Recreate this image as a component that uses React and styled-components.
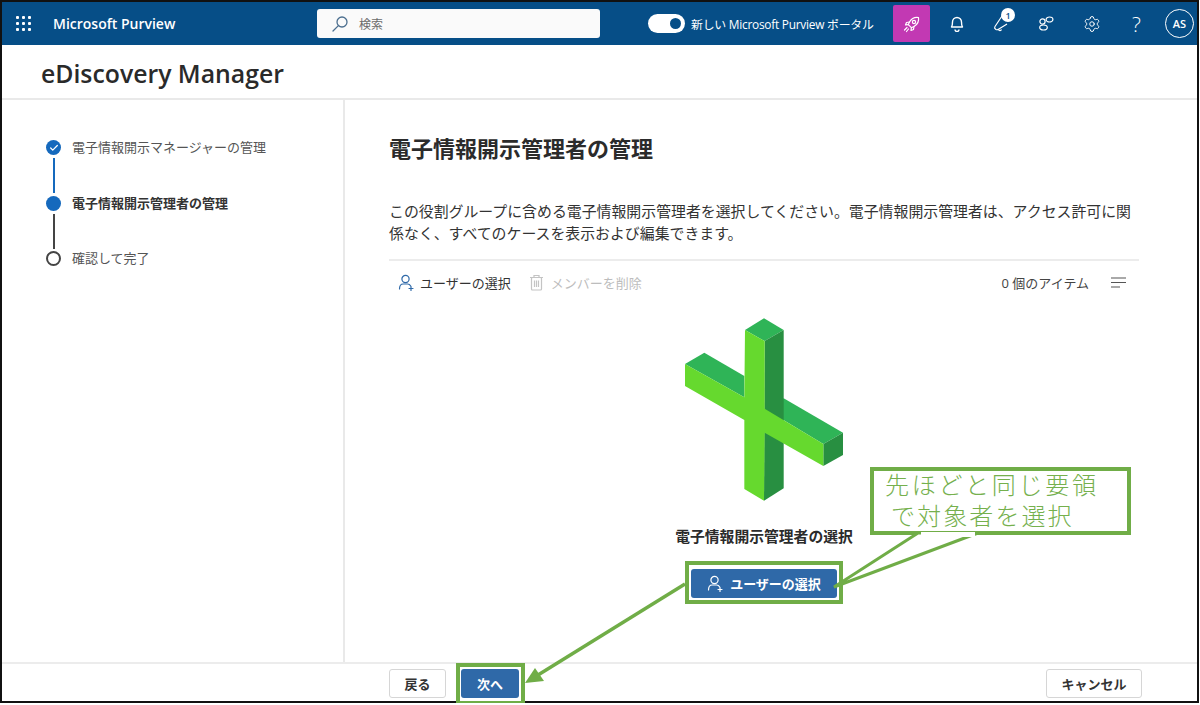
import React from "react";
import styled, { createGlobalStyle } from "styled-components";
import { Check, Settings } from "lucide-react";

const GlobalStyle = createGlobalStyle`
  html, body {
    margin: 0;
    padding: 0;
    background: #fff;
  }
  body {
    font-family: "Open Sans", "Noto Sans CJK JP", sans-serif;
    color: #242424;
  }
  * {
    box-sizing: border-box;
  }
`;

const green = "#70ad47";

const Frame = styled.div`
  position: relative;
  width: 1199px;
  height: 703px;
  border: 2px solid #111;
  display: flex;
  flex-direction: column;
`;

const TopBar = styled.header`
  height: 43px;
  flex-shrink: 0;
  background: #064e87;
  color: #fff;
  display: flex;
  align-items: center;
`;

const Waffle = styled.div`
  display: grid;
  grid-template-columns: repeat(3, 3px);
  gap: 3px;
  margin-left: 14px;
  span {
    width: 3px;
    height: 3px;
    background: #fff;
    border-radius: 1px;
  }
`;

const Brand = styled.div`
  font-size: 14px;
  font-weight: 600;
  margin-left: 22px;
  width: 264px;
  white-space: nowrap;
`;

const SearchBox = styled.div`
  width: 283px;
  height: 29px;
  background: #fafafa;
  border-radius: 3px;
  display: flex;
  align-items: center;
  gap: 10px;
  padding-left: 14px;
  color: #6b6b6b;
  font-size: 12px;
  svg {
    display: block;
  }
`;

const Toggle = styled.div`
  width: 37px;
  height: 19px;
  margin-left: 48px;
  border-radius: 10px;
  background: #fff;
  position: relative;
  flex-shrink: 0;
  &::after {
    content: "";
    position: absolute;
    right: 4px;
    top: 4px;
    width: 11px;
    height: 11px;
    border-radius: 50%;
    background: #064e87;
  }
`;

const ToggleLabel = styled.div`
  font-size: 11.9px;
  margin-left: 6px;
  width: 202px;
  white-space: nowrap;
  letter-spacing: -0.25px;
`;

const RocketButton = styled.div`
  width: 37px;
  height: 37px;
  background: #c239b3;
  border-radius: 2px;
  display: flex;
  align-items: center;
  justify-content: center;
  flex-shrink: 0;
`;

const HeaderIcon = styled.div`
  width: 45px;
  height: 37px;
  display: flex;
  align-items: center;
  justify-content: center;
  position: relative;
  flex-shrink: 0;
  font-size: 21px;
  font-weight: 300;
`;

const IconStrip = styled.div`
  display: flex;
  align-items: center;
  margin-left: 4px;
`;

const Badge = styled.span`
  position: absolute;
  top: 3px;
  left: 22px;
  width: 14px;
  height: 14px;
  border-radius: 50%;
  background: #fff;
  color: #064e87;
  font-size: 9px;
  font-weight: 600;
  display: flex;
  align-items: center;
  justify-content: center;
`;

const Avatar = styled.div`
  width: 29px;
  height: 29px;
  margin-left: 6px;
  border: 1px solid #fff;
  border-radius: 50%;
  font-size: 11px;
  font-weight: 600;
  display: flex;
  align-items: center;
  justify-content: center;
  flex-shrink: 0;
`;

const TitleBar = styled.div`
  height: 55px;
  flex-shrink: 0;
  border-bottom: 2px solid #e9e9e9;
  padding: 2px 0 0 39px;
  display: flex;
  align-items: center;
  font-size: 24.8px;
  font-weight: 600;
  color: #2a2a2a;
`;

const Body = styled.div`
  flex: 1;
  display: flex;
  min-height: 0;
`;

const Sidebar = styled.nav`
  width: 343px;
  flex-shrink: 0;
  border-right: 2px solid #e9e9e9;
  padding: 40px 0 0 44px;
`;

const Step = styled.div`
  display: flex;
  align-items: flex-start;
  gap: 11px;
  height: ${(p) => (p.$last ? "16px" : "55.5px")};
`;

const Rail = styled.div`
  width: 15px;
  display: flex;
  flex-direction: column;
  align-items: center;
  flex-shrink: 0;
`;

const Dot = styled.div`
  width: 15px;
  height: 15px;
  border-radius: 50%;
  flex-shrink: 0;
  display: flex;
  align-items: center;
  justify-content: center;
  background: ${(p) => (p.$open ? "#fff" : "#1569bd")};
  border: ${(p) => (p.$open ? "2px solid #444" : "none")};
`;

const Connector = styled.div`
  width: 2px;
  height: 35px;
  margin-top: 3px;
  background: ${(p) => p.$color};
`;

const StepLabel = styled.div`
  font-size: 13px;
  line-height: 15px;
  font-weight: ${(p) => (p.$active ? 700 : 400)};
  color: ${(p) => (p.$active ? "#333" : "#555")};
`;

const Main = styled.main`
  flex: 1;
  padding: 0 58px 0 44px;
  display: flex;
  flex-direction: column;
`;

const Heading = styled.h1`
  margin: 32px 0 0;
  font-size: 22px;
  line-height: 32px;
  font-weight: 700;
  color: #2b2b2b;
`;

const Intro = styled.p`
  margin: 36px 0 0;
  font-size: 14.9px;
  line-height: 22px;
  color: #333;
  white-space: nowrap;
`;

const Toolbar = styled.div`
  margin-top: 15px;
  height: 44px;
  border-top: 2px solid #ececec;
  display: flex;
  align-items: center;
  font-size: 13px;
  padding-left: 9px;
`;

const ToolItem = styled.div`
  display: flex;
  align-items: center;
  gap: ${(p) => (p.$disabled ? "7px" : "5px")};
  margin-left: ${(p) => (p.$disabled ? "18px" : "0")};
  color: ${(p) => (p.$disabled ? "#bdbdbd" : "#333")};
`;

const ItemCount = styled.div`
  margin-left: auto;
  display: flex;
  align-items: center;
  gap: 22px;
  color: #444;
  margin-right: 12px;
`;

const Empty = styled.div`
  display: flex;
  flex-direction: column;
  align-items: center;
  margin-top: 7px;
`;

const Illustration = styled.svg`
  display: block;
  margin-left: 2px;
`;

const EmptyTitle = styled.div`
  margin-top: 14px;
  font-size: 14.8px;
  line-height: 24px;
  font-weight: 700;
  color: #2b2b2b;
`;

const Highlighted = styled.div`
  position: relative;
  margin-top: ${(p) => p.$top || "0"};
  margin-left: ${(p) => p.$left || "0"};
`;

const Outline = styled.div`
  position: absolute;
  inset: ${(p) => p.$inset};
  border: 4px solid ${green};
  pointer-events: none;
`;

const PrimaryButton = styled.div`
  height: 29px;
  width: ${(p) => p.$width};
  padding-bottom: 1px;
  background: #2f69a8;
  color: #fff;
  border-radius: 3px;
  font-size: 13px;
  font-weight: 700;
  display: flex;
  align-items: center;
  justify-content: center;
  gap: 6px;
`;

const Footer = styled.footer`
  height: 39px;
  flex-shrink: 0;
  border-top: 2px solid #ececec;
  padding: 5px 55px 0 387px;
  display: flex;
  align-items: flex-start;
`;

const PlainButton = styled.div`
  height: 29px;
  width: ${(p) => p.$width};
  padding-bottom: 1px;
  border: 1px solid #d6d6d6;
  border-radius: 3px;
  background: #fff;
  color: #333;
  font-size: 13px;
  font-weight: 700;
  display: flex;
  align-items: center;
  justify-content: center;
  margin-left: ${(p) => p.$left || "0"};
`;

const Callout = styled.div`
  position: absolute;
  left: 868px;
  top: 465px;
  width: 261px;
  height: 68px;
  border: 4px solid ${green};
  background: #fff;
  color: #75b04d;
  font-size: 24px;
  font-weight: 300;
  font-family: "Noto Sans CJK JP", sans-serif;
  line-height: 31px;
  letter-spacing: 2.7px;
  padding-left: 11px;
  white-space: nowrap;
`;

const CalloutText = styled.div`
  margin-top: -3px;
  span {
    display: block;
    padding-left: 6px;
    letter-spacing: 2.1px;
  }
`;

const Overlay = styled.svg`
  position: absolute;
  left: -2px;
  top: -2px;
  pointer-events: none;
`;

const PlusIllustration = () => (
  <Illustration width="190" height="200" viewBox="0 0 570 600">
    <polygon points="45,162 103,128 223,198 223,262" fill="#2fb457" />
    <polygon points="284,296 341,265 519,368 460,402" fill="#2fb457" />
    <polygon points="460,402 519,368 519,435 460,468" fill="#288f41" />
    <polygon points="225,60 282,25 341,60 284,93" fill="#2fb457" />
    <polygon points="284,93 341,60 341,535 282,572" fill="#288f41" />
    <polygon points="225,60 284,93 284,296 460,402 460,468 284,368 282,572 223,537 223,330 45,228 45,162 223,262" fill="#66d92e" />
  </Illustration>
);

const UserAdd = ({ color }) => (
  <svg width="17" height="17" viewBox="0 0 17 17" fill="none" stroke={color} strokeWidth="1.2" strokeLinecap="round">
    <circle cx="7.5" cy="5" r="3.6" />
    <path d="M1.5 15c0-3 1.6-5 3.6-5h4.6c1.3 0 2.3.8 3 2" />
    <path d="M13 12.5v4M11 14.5h4" />
  </svg>
);

const SearchGlass = () => (
  <svg width="18" height="18" viewBox="0 0 18 18" fill="none" stroke="#4c6f8f" strokeWidth="1.3" strokeLinecap="round">
    <circle cx="11" cy="7" r="5" />
    <path d="M7.4 10.6 2 16" />
  </svg>
);

const RocketIcon = () => (
  <svg width="20" height="20" viewBox="0 0 20 20" fill="none" stroke="#fff" strokeWidth="1.2" strokeLinecap="round" strokeLinejoin="round">
    <path d="M16.5 3.5c-4-.6-7 1-9 4.5l-1.2 2.6 3.1 3.1 2.6-1.2c3.5-2 5.1-5 4.5-9z" />
    <circle cx="12" cy="8" r="1.6" />
    <path d="M7.5 8 4.5 8.5 3.5 11l2.8-.4M12 12.5l-.5 3-2.5 1 .4-2.800" />
    <path d="M5 13.5 2.5 16M6.5 15 4.500 17.500" />
  </svg>
);

const BellIcon = () => (
  <svg width="16" height="17" viewBox="0 0 16 17" fill="none" stroke="#fff" strokeWidth="1.4" strokeLinejoin="round">
    <path d="M2.5 12c.8-1 1-2 1-5a4.5 4.5 0 0 1 9 0c0 3 .2 4 1 5z" />
    <path d="M6 14.5a2 2 0 0 0 4 0" />
  </svg>
);

const Feedback = () => (
  <svg width="20" height="20" viewBox="0 0 20 20" fill="none" stroke="#fff" strokeWidth="1.2" strokeLinejoin="round">
    <path d="M10 2 3 12.5c-.6 1-.4 2 .4 2.5l.6.4c.8.5 1.7.4 2.5-.2L15 10" />
    <path d="M6.500 15.500c.4 1.300 2.400 1.500 3 .1" />
  </svg>
);

const Community = () => (
  <svg width="18" height="18" viewBox="0 0 18 18" fill="none" stroke="#fff" strokeWidth="1.2">
    <circle cx="4.5" cy="6.5" r="2.6" />
    <ellipse cx="11.5" cy="4.5" rx="3.4" ry="2.5" />
    <ellipse cx="5.5" cy="12.5" rx="3.8" ry="2.5" />
  </svg>
);

const TrashIcon = () => (
  <svg width="15" height="17" viewBox="0 0 15 17" fill="none" stroke="#c4c4c4" strokeWidth="1.2">
    <path d="M1 3.5h13M5 3.5V1.500h5v2" />
    <rect x="2.5" y="3.5" width="10" height="12.5" rx="1" />
    <path d="M5.5 6.500v6.500M7.5 6.500v6.500M9.5 6.500v6.500" />
  </svg>
);

const SortLines = () => (
  <svg width="16" height="11" viewBox="0 0 16 11" stroke="#555" strokeWidth="1.2">
    <path d="M0 1h15M0 5.500h15M0 10h9" />
  </svg>
);

export default function App() {
  return (
    <>
      <GlobalStyle />
      <Frame>
        <TopBar>
          <Waffle>
            {Array.from({ length: 9 }).map((_, i) => (
              <span key={i} />
            ))}
          </Waffle>
          <Brand>Microsoft Purview</Brand>
          <SearchBox>
            <SearchGlass />
            検索
          </SearchBox>
          <Toggle />
          <ToggleLabel>新しい Microsoft Purview ポータル</ToggleLabel>
          <RocketButton>
            <RocketIcon />
          </RocketButton>
          <IconStrip>
            <HeaderIcon>
              <BellIcon />
            </HeaderIcon>
            <HeaderIcon>
              <Feedback />
              <Badge>1</Badge>
            </HeaderIcon>
            <HeaderIcon>
              <Community />
            </HeaderIcon>
            <HeaderIcon>
              <Settings size={18} strokeWidth={1.3} />
            </HeaderIcon>
            <HeaderIcon>?</HeaderIcon>
          </IconStrip>
          <Avatar>AS</Avatar>
        </TopBar>
        <TitleBar>eDiscovery Manager</TitleBar>
        <Body>
          <Sidebar>
            <Step>
              <Rail>
                <Dot>
                  <Check size={10} color="#fff" strokeWidth={3} />
                </Dot>
                <Connector $color="#1569bd" />
              </Rail>
              <StepLabel>電子情報開示マネージャーの管理</StepLabel>
            </Step>
            <Step>
              <Rail>
                <Dot />
                <Connector $color="#444" />
              </Rail>
              <StepLabel $active>電子情報開示管理者の管理</StepLabel>
            </Step>
            <Step $last>
              <Rail>
                <Dot $open />
              </Rail>
              <StepLabel>確認して完了</StepLabel>
            </Step>
          </Sidebar>
          <Main>
            <Heading>電子情報開示管理者の管理</Heading>
            <Intro>
              この役割グループに含める電子情報開示管理者を選択してください。電子情報開示管理者は、アクセス許可に関
              <br />
              係なく、すべてのケースを表示および編集できます。
            </Intro>
            <Toolbar>
              <ToolItem>
                <UserAdd color="#2f69a8" />
                ユーザーの選択
              </ToolItem>
              <ToolItem $disabled>
                <TrashIcon />
                メンバーを削除
              </ToolItem>
              <ItemCount>
                0 個のアイテム
                <SortLines />
              </ItemCount>
            </Toolbar>
            <Empty>
              <PlusIllustration />
              <EmptyTitle>電子情報開示管理者の選択</EmptyTitle>
              <Highlighted $top="21px">
                <PrimaryButton $width="146px">
                  <UserAdd color="#fff" />
                  ユーザーの選択
                </PrimaryButton>
                <Outline $inset="-8px -6px -6px -6px" />
              </Highlighted>
            </Empty>
          </Main>
        </Body>
        <Footer>
          <PlainButton $width="57px">戻る</PlainButton>
          <Highlighted $left="15px">
            <PrimaryButton $width="58px">次へ</PrimaryButton>
            <Outline $inset="-6px -6px -7px -5px" />
          </Highlighted>
          <PlainButton $width="96px" $left="auto">
            キャンセル
          </PlainButton>
        </Footer>
        <Callout>
          <CalloutText>
            先ほどと同じ要領
            <span>で対象者を選択</span>
          </CalloutText>
        </Callout>
        <Overlay width="1200" height="705" viewBox="0 0 1200 705">
          <polygon points="918,533 834,587 978,533" fill="#fff" stroke={green} strokeWidth="3" />
          <path d="M921 534.5H975" stroke="#fff" strokeWidth="5" />
          <path d="M685 584 538 675" stroke={green} strokeWidth="3.5" />
          <polygon points="525,683 535,668 544,681" fill={green} />
        </Overlay>
      </Frame>
    </>
  );
}
